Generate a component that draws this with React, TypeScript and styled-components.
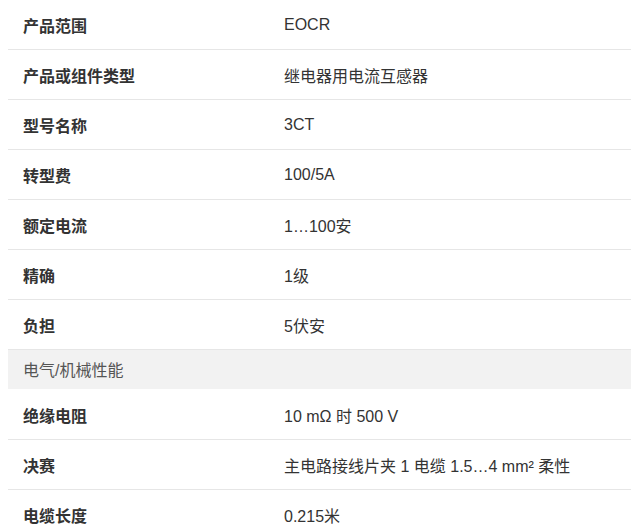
import styled, {createGlobalStyle} from "styled-components";

const GlobalStyle = createGlobalStyle`
    body {
        margin: 0 0 0 8px;
        background: #fff;
        font-family: "Liberation Sans", "Noto Sans CJK SC", sans-serif;
    }
`

type Spec = {label: string, value: string}

const general: Spec[] = [
    {label: "产品范围", value: "EOCR"},
    {label: "产品或组件类型", value: "继电器用电流互感器"},
    {label: "型号名称", value: "3CT"},
    {label: "转型费", value: "100/5A"},
    {label: "额定电流", value: "1…100安"},
    {label: "精确", value: "1级"},
    {label: "负担", value: "5伏安"},
]

const electrical: Spec[] = [
    {label: "绝缘电阻", value: "10 mΩ 时 500 V"},
    {label: "决赛", value: "主电路接线片夹 1 电缆 1.5…4 mm² 柔性"},
    {label: "电缆长度", value: "0.215米"},
]

export default function App() {
    return (
        <>
            <GlobalStyle/>
            <SpecTable>
                <tbody>
                {general.map(s => (
                    <Row key={s.label}>
                        <LabelCell>{s.label}</LabelCell>
                        <ValueCell>{s.value}</ValueCell>
                    </Row>
                ))}
                <SectionRow>
                    <td colSpan={2}>电气/机械性能</td>
                </SectionRow>
                {electrical.map(s => (
                    <Row key={s.label}>
                        <LabelCell>{s.label}</LabelCell>
                        <ValueCell>{s.value}</ValueCell>
                    </Row>
                ))}
                </tbody>
            </SpecTable>
        </>
    )
}

// top edge of the table sits just above the viewport
const SpecTable = styled.table`
    width: 623px;
    margin-top: -1px;
    border-collapse: collapse;
    font-size: 16px;
    color: #333;
`

const Row = styled.tr`
    td {
        height: 50px;
        padding: 2px 15px 0;
        border-bottom: 1px solid #e6e6e6;
        vertical-align: middle;
        box-sizing: border-box;
    }
`

const LabelCell = styled.td`
    width: 261px;
    font-weight: bold;
    color: #333;
`

const ValueCell = styled.td`
    color: #333;
`

const SectionRow = styled.tr`
    background: #f2f2f2;

    td {
        height: 40px;
        padding: 0 15px;
        color: #555;
        vertical-align: middle;
        box-sizing: border-box;
    }
`
